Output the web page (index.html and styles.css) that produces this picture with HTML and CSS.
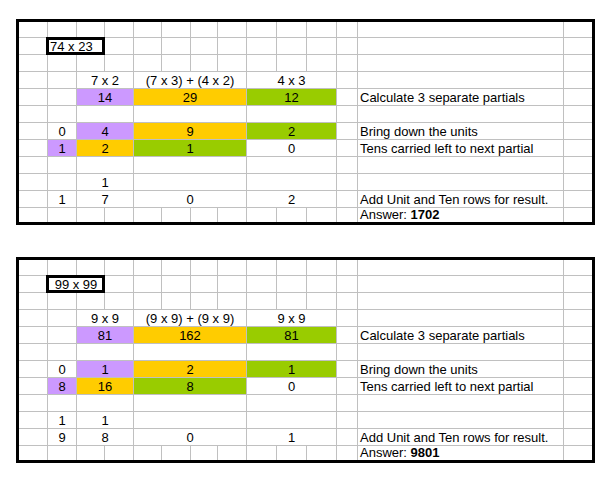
FILE: index.html
```html
<!DOCTYPE html>
<html>
<head>
<meta charset="utf-8">
<link rel="stylesheet" href="styles.css">
</head>
<body>
<div class="page">
  <div class="sheet">
    <div class="row"><div class="c"></div><div class="c"></div><div class="c"></div><div class="c"></div><div class="c"></div><div class="c"></div><div class="c"></div><div class="c"></div><div class="c"></div><div class="c"></div><div class="c"></div><div class="c"></div><div class="c"></div><div class="c"></div></div>
    <div class="row"><div class="c"></div><div class="c s2 box">74 x 23</div><div class="c"></div><div class="c"></div><div class="c"></div><div class="c"></div><div class="c"></div><div class="c"></div><div class="c"></div><div class="c"></div><div class="c"></div><div class="c"></div><div class="c"></div></div>
    <div class="row"><div class="c"></div><div class="c"></div><div class="c"></div><div class="c"></div><div class="c"></div><div class="c"></div><div class="c"></div><div class="c"></div><div class="c"></div><div class="c"></div><div class="c"></div><div class="c"></div><div class="c"></div><div class="c"></div></div>
    <div class="row"><div class="c"></div><div class="c"></div><div class="c s2 n">7 x 2</div><div class="c s4 n">(7 x 3) + (4 x 2)</div><div class="c s3 n">4 x 3</div><div class="c"></div><div class="c"></div><div class="c"></div></div>
    <div class="row"><div class="c"></div><div class="c"></div><div class="c s2 n pu">14</div><div class="c s4 n ye">29</div><div class="c s3 n gr">12</div><div class="c"></div><div class="c">Calculate 3 separate partials</div><div class="c"></div></div>
    <div class="row"><div class="c"></div><div class="c"></div><div class="c s2"></div><div class="c s4"></div><div class="c s3"></div><div class="c"></div><div class="c"></div><div class="c"></div></div>
    <div class="row"><div class="c"></div><div class="c n">0</div><div class="c s2 n pu">4</div><div class="c s4 n ye">9</div><div class="c s3 n gr">2</div><div class="c"></div><div class="c">Bring down the units</div><div class="c"></div></div>
    <div class="row"><div class="c"></div><div class="c n pu">1</div><div class="c s2 n ye">2</div><div class="c s4 n gr">1</div><div class="c s3 n">0</div><div class="c"></div><div class="c">Tens carried left to next partial</div><div class="c"></div></div>
    <div class="row"><div class="c"></div><div class="c"></div><div class="c s2"></div><div class="c s4"></div><div class="c s3"></div><div class="c"></div><div class="c"></div><div class="c"></div></div>
    <div class="row"><div class="c"></div><div class="c"></div><div class="c s2 n">1</div><div class="c s4"></div><div class="c s3"></div><div class="c"></div><div class="c"></div><div class="c"></div></div>
    <div class="row"><div class="c"></div><div class="c n">1</div><div class="c s2 n">7</div><div class="c s4 n">0</div><div class="c s3 n">2</div><div class="c"></div><div class="c">Add Unit and Ten rows for result.</div><div class="c"></div></div>
    <div class="row"><div class="c"></div><div class="c"></div><div class="c"></div><div class="c"></div><div class="c"></div><div class="c"></div><div class="c"></div><div class="c"></div><div class="c"></div><div class="c"></div><div class="c"></div><div class="c"></div><div class="c"><span>Answer: <b>1702</b></span></div><div class="c"></div></div>
  </div>

  <div class="sheet">
    <div class="row"><div class="c"></div><div class="c"></div><div class="c"></div><div class="c"></div><div class="c"></div><div class="c"></div><div class="c"></div><div class="c"></div><div class="c"></div><div class="c"></div><div class="c"></div><div class="c"></div><div class="c"></div><div class="c"></div></div>
    <div class="row"><div class="c"></div><div class="c s2 box n">99 x 99</div><div class="c"></div><div class="c"></div><div class="c"></div><div class="c"></div><div class="c"></div><div class="c"></div><div class="c"></div><div class="c"></div><div class="c"></div><div class="c"></div><div class="c"></div></div>
    <div class="row"><div class="c"></div><div class="c"></div><div class="c"></div><div class="c"></div><div class="c"></div><div class="c"></div><div class="c"></div><div class="c"></div><div class="c"></div><div class="c"></div><div class="c"></div><div class="c"></div><div class="c"></div><div class="c"></div></div>
    <div class="row"><div class="c"></div><div class="c"></div><div class="c s2 n">9 x 9</div><div class="c s4 n">(9 x 9) + (9 x 9)</div><div class="c s3 n">9 x 9</div><div class="c"></div><div class="c"></div><div class="c"></div></div>
    <div class="row"><div class="c"></div><div class="c"></div><div class="c s2 n pu">81</div><div class="c s4 n ye">162</div><div class="c s3 n gr">81</div><div class="c"></div><div class="c">Calculate 3 separate partials</div><div class="c"></div></div>
    <div class="row"><div class="c"></div><div class="c"></div><div class="c s2"></div><div class="c s4"></div><div class="c s3"></div><div class="c"></div><div class="c"></div><div class="c"></div></div>
    <div class="row"><div class="c"></div><div class="c n">0</div><div class="c s2 n pu">1</div><div class="c s4 n ye">2</div><div class="c s3 n gr">1</div><div class="c"></div><div class="c">Bring down the units</div><div class="c"></div></div>
    <div class="row"><div class="c"></div><div class="c n pu">8</div><div class="c s2 n ye">16</div><div class="c s4 n gr">8</div><div class="c s3 n">0</div><div class="c"></div><div class="c">Tens carried left to next partial</div><div class="c"></div></div>
    <div class="row"><div class="c"></div><div class="c"></div><div class="c s2"></div><div class="c s4"></div><div class="c s3"></div><div class="c"></div><div class="c"></div><div class="c"></div></div>
    <div class="row"><div class="c"></div><div class="c n">1</div><div class="c s2 n">1</div><div class="c s4"></div><div class="c s3"></div><div class="c"></div><div class="c"></div><div class="c"></div></div>
    <div class="row"><div class="c"></div><div class="c n">9</div><div class="c s2 n">8</div><div class="c s4 n">0</div><div class="c s3 n">1</div><div class="c"></div><div class="c">Add Unit and Ten rows for result.</div><div class="c"></div></div>
    <div class="row"><div class="c"></div><div class="c"></div><div class="c"></div><div class="c"></div><div class="c"></div><div class="c"></div><div class="c"></div><div class="c"></div><div class="c"></div><div class="c"></div><div class="c"></div><div class="c"></div><div class="c"><span>Answer: <b>9801</b></span></div><div class="c"></div></div>
  </div>
</div>
</body>
</html>
```

FILE: styles.css
```css
html, body {
  margin: 0;
  padding: 0;
  background: #fff;
}

body {
  font-family: "Liberation Sans", Arial, sans-serif;
  font-size: 13px;
  color: #000;
}

.page {
  display: flex;
  flex-direction: column;
  align-items: flex-start;
  gap: 32px;
  padding: 19px 0 0 16px;
}

.sheet {
  display: grid;
  width: max-content;
  border: 3px solid #000;
  grid-template-columns: 29px 29px 28px 29px 28px 29px 27px 29px 30px 30px 30px 21px 206px 28px;
  grid-template-rows: 16px repeat(10, 17px) 14px;
}

.row {
  display: contents;
}

.c {
  box-sizing: border-box;
  border-right: 1px solid #c0c0c0;
  border-bottom: 1px solid #c0c0c0;
  display: flex;
  align-items: flex-end;
  padding: 0 2px;
  white-space: nowrap;
  line-height: 15px;
  position: relative;
}

.row > .c:last-child {
  border-right: 0;
}

.row:last-child > .c {
  border-bottom: 0;
}

.s2 { grid-column: span 2; }
.s3 { grid-column: span 3; }
.s4 { grid-column: span 4; }

.n { justify-content: center; }

.pu { background: #cc99ff; }
.ye { background: #ffcc00; }
.gr { background: #99cc00; }

.box::after {
  content: "";
  position: absolute;
  top: -1px;
  left: -2px;
  right: -1px;
  bottom: -1px;
  border: 3px solid #000;
  pointer-events: none;
}
```
